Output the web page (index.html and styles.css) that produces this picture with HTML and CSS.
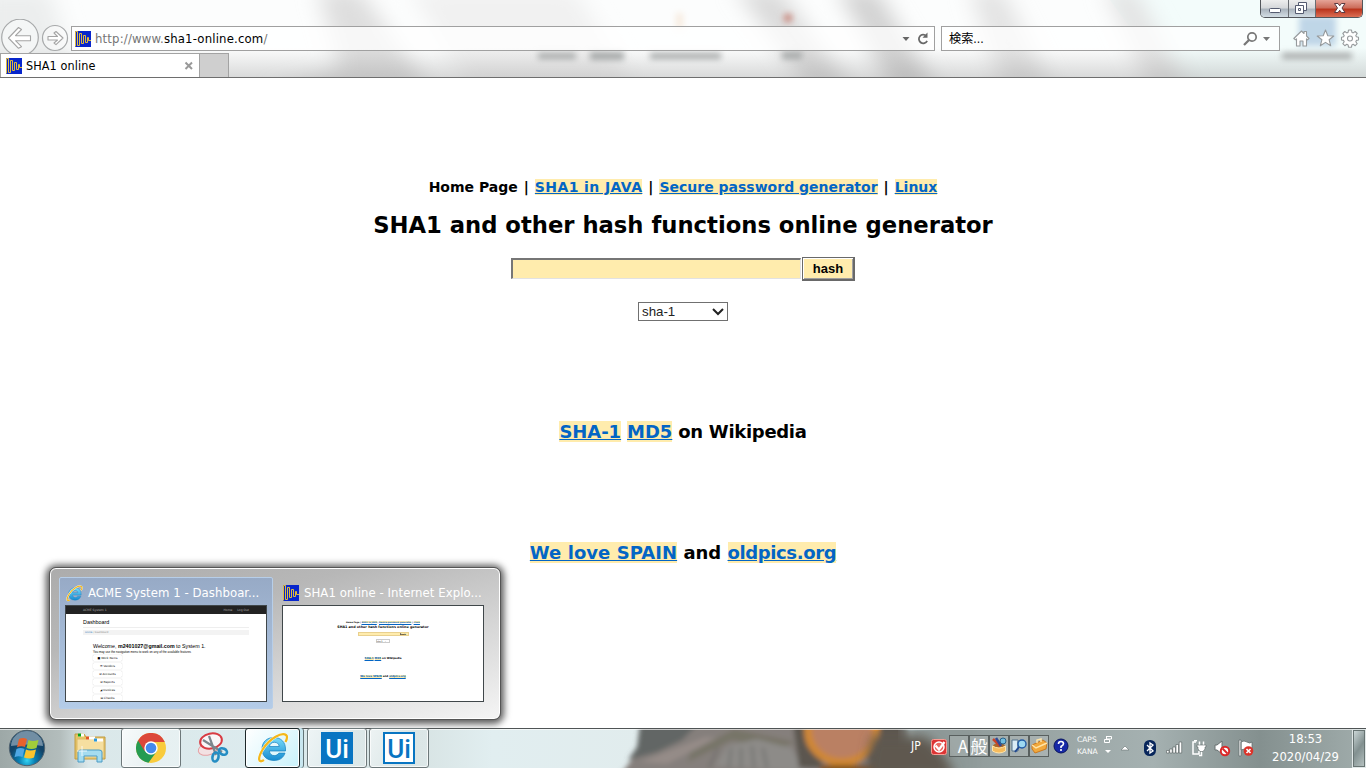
FILE: index.html
```html
<!DOCTYPE html>
<html lang="ja">
<head>
<meta charset="utf-8">
<title>SHA1 online</title>
<link rel="stylesheet" href="styles.css">
</head>
<body>
<svg width="0" height="0" class="defs">
  <symbol id="wave" viewBox="0 0 16 16"><path fill="#0826cc" d="M0 0h16v16H0z"/><path d="M.5 15.500V.5h2v14h2V2.500h2v10h2V4.500h2v7h2V6.500h1v3H16" fill="none" stroke="#f8cc2d" stroke-width=".9"/></symbol>
  <symbol id="ie" viewBox="0 0 32 32"><defs><linearGradient id="ieb" x2="0" y2="1"><stop stop-color="#79dcfa"/><stop offset="1" stop-color="#168bd0"/></linearGradient></defs><path d="M28.500 19H12.300c.4 3 2.300 4.600 5 4.600 2.100 0 3.600-.9 4.600-2.500h6.100c-1.700 5-5.600 7.400-11 7.400C9.800 28.500 5 24 5 17S9.800 5.500 17 5.500 28.500 10.400 28.500 17zM12.400 14.500h9.800c-.3-2.700-2.100-4.200-4.800-4.200s-4.500 1.500-5 4.200z" fill="url(#ieb)" stroke="#1680bd" stroke-width=".7"/><path d="M7 28c-6 4-6.500-2-1-11C13 6 25 0 29 3c2 1.500 1 4-.5 7" fill="none" stroke="#fff" stroke-width="3"/><path d="M7 28c-6 4-6.500-2-1-11C13 6 25 0 29 3c2 1.500 1 4-.5 7" fill="none" stroke="#f3b81c" stroke-width="2.300"/></symbol>
</svg>
<header class="chrome">
  <svg class="glass" viewBox="0 0 1366 77" preserveAspectRatio="none">
    <defs>
      <linearGradient id="shade" x2="0" y2="1"><stop offset=".62" stop-color="#888" stop-opacity="0"/><stop offset="1" stop-color="#888" stop-opacity=".3"/></linearGradient>
      <filter id="b8"><feGaussianBlur stdDeviation="11 9"/></filter>
      <filter id="b3" x="-20%" y="-60%" width="140%" height="220%"><feGaussianBlur stdDeviation="3"/></filter>
    </defs>
    <path fill="#fcfdfd" d="M0 0h1366v77H0z"/>
    <path fill="#f3fcfb" d="M1110 0h256v77h-200z"/>
    <g filter="url(#b8)">
      <path fill="#eceeee" d="M-20-10H50L80 90H-20z"/>
      <path fill="#dedede" d="M318-10h42l70 100H270l70-20z"/>
      <path fill="#f1f1f1" d="M410-10h165l60 100H470z"/>
      <path fill="#dadada" d="M736-10h44l73 100h-44z"/>
      <path fill="#d2d2d2" d="M838-10h39l60 100h-44z"/>
      <path fill="#e3e3e3" d="M970-10h33l50 100h-50zM1105-10h30l55 100h-40z"/>
    </g>
    <path fill="url(#shade)" d="M0 0h1366v77H0z"/>
    <g filter="url(#b3)">
      <path fill="#a4a7a7" d="M538 53h38v6h-38zM590 52h34v8h-34zM650 53h71v6h-71zM782 52h20v7h-20zM1282 53h70v6h-70z"/>
      <path fill="#c98a80" d="M784 14h8v8h-8z"/><path fill="#f7ebdf" d="M676 13h7v16h-7z"/>
      <path fill="#bfd6e7" d="M1299 16h37v30h-37z"/>
    </g>
  </svg>
  <div class="caption">
    <span class="cap min"><svg width="27" height="18"><rect x="8.500" y="8.500" width="11" height="4" rx="1" fill="#fff" stroke="#555b70"/></svg></span>
    <span class="cap max"><svg width="26" height="18"><g fill="#fff" stroke="#555b70"><path d="M9.500 2.500h8v8h-8z"/><path d="M6.500 5.500h8v8h-8z"/><path d="M9.500 8.500h2v2h-2z"/></g></svg></span>
    <span class="cap close"><svg width="46" height="18"><path d="M18.500 3.500h3.500l1.700 2.300 1.700-2.300H29L26 8l3 4.500h-3.500l-1.800-2.200-1.700 2.200h-3.500l3-4.500z" fill="#fff" stroke="#5b3b42"/></svg></span>
  </div>
  <div class="bar">
    <svg class="navs" width="70" height="36"><g fill="#fff" fill-opacity=".45" stroke="#a7a9aa" stroke-width="1.200"><circle cx="20" cy="18.500" r="18.300"/><circle cx="55" cy="19" r="12.500"/></g><g fill="#fff" stroke="#a5a5a5" stroke-width="1.100" stroke-linejoin="round"><path d="M8.500 19 18.500 8.500l3 2-6 6.200H30.500v5H15.500l6 6-3 1.600z"/><path d="M63 19 56 12.500l-2 1.500 3.500 3.500H48v3.500h9.500L54 24l2 1.600z"/></g></svg>
    <div class="address">
      <svg width="16" height="16"><use href="#wave"/></svg>
      <span class="url">http://www.<b>sha1-online.com</b>/</span>
      <svg class="right" width="36" height="20"><path d="M4.500 8h7L8 12z" fill="#666"/><path d="M28.300 7a4.300 4.300 0 1 0 .8 4.800" fill="none" stroke="#696969" stroke-width="1.800"/><path d="M29.500 3.500v5.200h-5z" fill="#696969"/></svg>
    </div>
    <div class="search"><span>検索...</span><svg width="32" height="20"><circle cx="11" cy="8" r="4.200" fill="none" stroke="#777" stroke-width="1.700"/><path d="m8 11-5 5" stroke="#777" stroke-width="2.300"/><path d="M22 8h7l-3.500 4z" fill="#777"/></svg></div>
    <svg class="tools" width="72" height="24"><g fill="#fff" stroke="#969a9c" stroke-width="1.100" stroke-linejoin="round"><path d="m.8 11.500 7.700-7.500 2.500 2.500V4.500h2.500V9l2.500 2.500-1.500 1.300-1-1V19H10v-5H7v5H3.500v-7.200l-1 1z"/><path d="m32.500 3 2.300 5.800 6 .2-4.700 3.700 1.600 6.100-5.200-3.400-5.200 3.400 1.600-6.100L24.200 9l6-.2z"/><path d="M55.500 3h3l.4 2.300 1.300.6 2-1.400 2 2-1.400 2 .6 1.300 2.100.4v2.800l-2.100.4-.6 1.300 1.400 2-2 2-2-1.400-1.300.6-.4 2.300h-3l-.4-2.300-1.300-.6-2 1.400-2-2 1.400-2-.6-1.300-2.100-.4v-2.800l2.100-.4.6-1.300-1.400-2 2-2 2 1.400 1.300-.6z"/><circle cx="57" cy="11.500" r="2.500"/></g></svg>
  </div>
  <div class="tabs">
    <div class="tab"><svg width="16" height="16"><use href="#wave"/></svg><span>SHA1 online</span><svg class="x" width="10" height="10"><path d="m1.500 1.500 6.500 6.500m0-6.500L1.500 8" stroke="#999" stroke-width="2"/></svg></div>
    <div class="newtab"></div>
  </div>
</header>
<main class="page">
  <nav class="links">Home Page <i>|</i> <a class="java">SHA1 in JAVA</a> <i>|</i> <a>Secure password generator</a> <i>|</i> <a>Linux</a></nav>
  <h1>SHA1 and other hash functions online generator</h1>
  <div class="form"><span class="field"></span><span class="hash">hash</span></div>
  <div class="select"><span>sha-1</span><svg width="14" height="10"><path d="m2 2 5 5 5-5" fill="none" stroke="#222" stroke-width="2"/></svg></div>
  <p class="wiki"><a>SHA-1</a> <a>MD5</a> on Wikipedia</p>
  <p class="spain"><a class="love">We love SPAIN</a> and <a class="old">oldpics.org</a></p>
</main>
<aside class="previews">
  <div class="preview active">
    <div class="ptitle"><svg width="17" height="17"><use href="#ie"/></svg><span>ACME System 1 - Dashboar...</span></div>
    <div class="thumb acme">
      <div class="ahead"><span>ACME System 1</span><span class="ar">Home &nbsp; &nbsp; Log Out</span></div>
      <div class="dash">Dashboard</div>
      <div class="crumb"><i>Home</i> / Dashboard</div>
      <div class="welcome">Welcome, <b>m2401027@gmail.com</b> to System 1.</div>
      <div class="note">You may use the navigation menu to work on any of the available features</div>
      <div class="mi">■ Work Items</div><div class="mi">☰ Vendors</div><div class="mi">✉ Accounts</div><div class="mi">✉ Reports</div><div class="mi">◢ Invoices</div><div class="mi">▤ Checks</div>
    </div>
  </div>
  <div class="preview">
    <div class="ptitle"><svg width="16" height="16"><use href="#wave"/></svg><span>SHA1 online - Internet Explo...</span></div>
    <div class="thumb sha">
      <div class="s1">Home Page | <a>SHA1 in JAVA</a> | <a>Secure password generator</a> | <a>Linux</a></div>
      <div class="s2">SHA1 and other hash functions online generator</div>
      <div class="s3"><span></span><b>hash</b></div>
      <div class="s4">sha-1 &nbsp; ⌄</div>
      <div class="s5"><a>SHA-1</a> <a>MD5</a> on Wikipedia</div>
      <div class="s6"><a>We love SPAIN</a> and <a>oldpics.org</a></div>
    </div>
  </div>
</aside>
<footer class="taskbar">
  <svg class="glass" viewBox="0 0 1366 40" preserveAspectRatio="none">
    <defs>
      <linearGradient id="tb"><stop stop-color="#9da8a7"/><stop offset=".044" stop-color="#b3bdbc"/><stop offset=".065" stop-color="#dbe8ea"/><stop offset=".2" stop-color="#dcebee"/><stop offset=".3" stop-color="#d6e2e2"/><stop offset=".36" stop-color="#e1eef0"/><stop offset=".47" stop-color="#e1eced"/></linearGradient>
      <linearGradient id="tray"><stop stop-color="#8e9998"/><stop offset=".5" stop-color="#a5b1b1"/><stop offset=".75" stop-color="#84908f"/><stop offset="1" stop-color="#a1adac"/></linearGradient>
      <filter id="b2"><feGaussianBlur stdDeviation="2.500"/></filter>
      <filter id="b6"><feGaussianBlur stdDeviation="6"/></filter>
    </defs>
    <path fill="url(#tb)" d="M0 0h1366v40H0z"/>
    <g filter="url(#b2)">
      <path fill="#857f7b" d="M640-6h250v52H621l17-23z"/>
      <path fill="#626665" d="m640-4 58 0-16 16-25 12-29 8 9-13z"/>
      <path fill="#777468" d="m690 25 44-24 61 13-20 8-43-10-44 22z"/>
      <path fill="#958c88" d="m640 34 65-25 12 1-50 26z"/>
      <path fill="#8d8b88" d="m715 38 12-20 30-7 34 9 16 24z"/>
      <path d="m709 40 9-20m11 20 2-20m10 20V20m13 20-2-22m15 22-4-20" stroke="#6c6d6b" stroke-width="2"/>
      <path fill="#5b5650" d="M793-4h20l10 44h-24zM868 27l10-35h30l10 60h-40z"/>
      <ellipse cx="842" cy="3" rx="34" ry="31" fill="#ba8063" stroke="#cf8735" stroke-width="8"/>
      <path fill="#82521d" d="M820 37h62v8h-62z"/>
    </g>
    <path fill="url(#tray)" d="M940 0h426v40H940z"/>
    <path filter="url(#b6)" fill="#8e9998" d="M905-10h70v60h-70z"/>
    <path filter="url(#b6)" fill="#5f5950" d="M872 8h52q20 12 32 42H865z"/>
    <path d="M0 .5h1366" stroke="#4f5455"/><path d="M0 1.500h1366" stroke="#fff" opacity=".65"/>
  </svg>
  <div class="start"><svg width="38" height="38" viewBox="0 0 38 38"><defs><radialGradient id="orb" cy=".85"><stop stop-color="#35d4f3"/><stop offset=".45" stop-color="#087fb3"/><stop offset="1" stop-color="#134468"/></radialGradient></defs><circle cx="19" cy="19" r="17.700" fill="url(#orb)" stroke="#50626f"/><path d="M3 17a16 15 0 0 1 32 0q-15-3-32 0z" fill="#fff" opacity=".4"/><path d="M11 10q4-2 8 0l-2 8q-4-1.500-8 .3z" fill="#e7622d"/><path d="M20.500 11q4 2 10 0l-2 8q-5 2-10 0z" fill="#a2cd39"/><path d="M8.500 20q4-2 8 0l-2 8q-4-1.500-8 .2z" fill="#4fa7e4"/><path d="M18 20.500q4 2 10 0l-2 8q-4 2-10 0z" fill="#fbc42d"/></svg></div>
  <div class="task plain explorer"><svg width="34" height="32"><path d="M2 2h9l2 3h19v22H2z" fill="#e5c565" stroke="#c09a43"/><path d="M4 7h27v19H4z" fill="#f6dfa0" stroke="#dcb966"/><path d="M5 3h6M13 6h9M21 8h9" stroke="#fff" stroke-width="3"/><path d="M5 3h3" stroke="#09a31a" stroke-width="3"/><path d="M13 6h3" stroke="#e15724" stroke-width="3"/><path d="M21 8h3" stroke="#2998dd" stroke-width="3"/><path d="M5 30V20q0-2 3-2h18q3 0 3 2v10h-5v-6H11v6z" fill="#a5dcf0" stroke="#4a9bc5"/><path d="M4 19h10M9 14v10" stroke="#fff" opacity=".8"/></svg></div>
  <div class="task chromeapp"><svg width="30" height="30" viewBox="0 0 30 30"><circle cx="15" cy="15" r="15" fill="#f9cb3c"/><path d="M15 15 2 7.500A15 15 0 0 0 12.500 29.800L21 18z" fill="#259b52"/><path d="M2 7.500A15 15 0 0 1 28.800 9H15l-6.500 9z" fill="#dc473a"/><circle cx="15" cy="15" r="6.700" fill="#fff"/><circle cx="15" cy="15" r="5.300" fill="#4589ed"/></svg></div>
  <div class="task plain snip"><svg width="32" height="34"><g fill="none"><ellipse cx="11" cy="18" rx="10" ry="6" fill="#f3e1e3" stroke="#e6a0a4" transform="rotate(-15 11 18)"/><ellipse cx="14" cy="10" rx="11" ry="7.500" fill="#f9f6f8" stroke="#d83b43" stroke-width="2" transform="rotate(-12 14 10)"/><path d="m6 9 19 12M12 5l7 19" stroke="#7c858c" stroke-width="2.200"/><ellipse cx="18.500" cy="26" rx="3" ry="4.500" stroke="#258dc3" stroke-width="2.600" transform="rotate(12 18.500 26)"/><ellipse cx="26" cy="20.500" rx="4.200" ry="3" stroke="#258dc3" stroke-width="2.600" transform="rotate(25 26 20.500)"/></g></svg></div>
  <div class="task ieapp"><svg width="32" height="32"><use href="#ie"/></svg></div>
  <div class="task uione"><span class="ui">Ui</span></div>
  <div class="task uitwo"><span class="ui inv">Ui</span></div>
  <div class="tray">
    <span class="jp">JP</span>
    <svg class="atok" width="16" height="16"><rect x=".5" y=".5" width="15" height="15" rx="2" fill="#dc3434" stroke="#f79b92"/><circle cx="8" cy="8" r="5" fill="#e86a62" stroke="#fff" stroke-width="1.500"/><path d="m4.500 6.500 3.500 4 5.500-7.500" stroke="#fff" stroke-width="2.200" fill="none"/></svg>
    <span class="ime"><em class="a">A</em><em>般</em>
      <em><svg width="18" height="18"><ellipse cx="9" cy="9" rx="6" ry="3" fill="#a9682b"/><path d="m3 2 7 7" stroke="#c8442a" stroke-width="2.500"/><path d="m6 1 5 8" stroke="#304a97" stroke-width="2.500"/><circle cx="13" cy="4" r="3" fill="#72bddf" stroke="#28618b"/><path d="M2.500 9q6.500 4 13 0v5q-6.500 4-13 0z" fill="#f6bb5c" stroke="#ffe4aa"/></svg></em>
      <em><svg width="18" height="18"><path d="M2 3h6v11H2zM8 4h5v6H8z" fill="#dcecf5" stroke="#55738c"/><circle cx="12" cy="7" r="4" fill="#9ed8f1" stroke="#235ca7" stroke-width="1.400"/><path d="m9 10-4 5" stroke="#204891" stroke-width="2"/></svg></em>
      <em><svg width="18" height="18"><path d="m2 8 11-5 4 3-1 6-11 4-3-4z" fill="#f1a83c" stroke="#c97921"/><path d="m2 8 4 3 11-5M7 6V3l4-1v3" fill="none" stroke="#ffe4a7" stroke-width="1.500"/></svg></em></span>
    <svg class="help" width="16" height="16"><circle cx="8" cy="8" r="7" fill="#1729a7" stroke="#08145e"/><path d="M5.500 6q0-2.500 2.500-2.500t2.500 2.300Q10.500 7 8 8.500V10M8 11v2" fill="none" stroke="#fff" stroke-width="1.600"/></svg>
    <span class="caps"><span>CAPS <svg width="8" height="7"><path d="M2.500 0v3h5V.5h-5M.5 3.500h5v3h-5z" fill="none" stroke="#fff"/></svg></span><span>KANA <svg width="8" height="5"><path d="M1 1h6L4 4z" fill="#fff"/></svg></span></span>
    <svg class="up" width="10" height="8"><path d="m1 6 4-4 4 4z" fill="#fff" stroke="#687473" stroke-width=".6"/></svg>
    <svg class="bt" width="12" height="16"><rect width="12" height="16" rx="5.500" fill="#08265b"/><path d="m3 5 6 6-3 2V3l3 2-6 6" fill="none" stroke="#fff" stroke-width="1.300"/></svg>
    <svg class="signal" width="17" height="14"><g fill="#fff" stroke="#505a5a" stroke-width=".6"><path d="M.5 9.500h2.500v2.500H.5zM3.700 8h2.500v4H3.700zM6.900 6h2.500v6H6.900zM10 3.500h2.500V12H10zM13.200 1h2.500v11h-2.500z"/></g></svg>
    <svg class="power" width="16" height="17"><path d="M5 2H2v12h6v-3" fill="none" stroke="#fff" stroke-width="1.500"/><path d="M3 .8h3M8.500 1.500V5m4-3.500V5M10.500 11v4.500H8" fill="none" stroke="#fff" stroke-width="1.500"/><path d="M6 5h9v2h-1v2l-2 2.500H9L7 9V7H6z" fill="#fff" stroke="#5e6868" stroke-width=".6"/></svg>
    <svg class="vol" width="18" height="18"><path d="M2 6h2l5-4v13l-5-4H2z" fill="#fff" stroke="#687171"/><circle cx="12" cy="12" r="4.200" fill="#fff" stroke="#db2828" stroke-width="2"/><path d="m9.500 9.500 5 5" stroke="#db2828" stroke-width="2"/></svg>
    <svg class="flag" width="18" height="18"><path d="M2 1h2v16H2zM4 3q3-2 6 0t5 0v8q-3 2-5 0t-6 0z" fill="#fff" stroke="#667070" stroke-width=".8"/><circle cx="11.500" cy="12" r="4.800" fill="#dc3229"/><path d="m9.500 10 4 4m0-4-4 4" stroke="#fff" stroke-width="1.600"/></svg>
    <span class="clock"><span>18:53</span><span>2020/04/29</span></span>
    <span class="show"></span>
  </div>
</footer>
</body>
</html>
```
FILE: styles.css
```css
* { box-sizing: border-box; }
body { margin: 0; width: 1366px; height: 768px; overflow: hidden; position: relative; display: flex; flex-direction: column; background: #fff; font-family: "DejaVu Sans", sans-serif; color: #000; }
svg { display: block; flex: none; }
.defs { position: absolute; }
.glass { position: absolute; inset: 0; width: 100%; height: 100%; }

/* browser chrome */
.chrome { position: relative; flex: none; height: 78px; border-bottom: 1px solid #6e6e6e; padding-top: 19px; font-family: "DejaVu Sans Condensed", "DejaVu Sans", sans-serif; font-size: 13px; }
.caption { position: absolute; left: 1260px; top: 0; height: 18px; display: flex; border: 1px solid #53565b; border-top: 0; border-radius: 0 0 5px 5px; overflow: hidden; }
.cap { border-right: 1px solid #6a6d72; height: 18px; background: linear-gradient(#eee 0, #d5d7da 45%, #a9b2bb 50%, #d8e2e9); }
.cap.min { width: 28px; }
.cap.max { width: 27px; }
.cap.close { width: 46px; border: 0; background: linear-gradient(#e5a498 0, #cb6a58 45%, #b9321b 50%, #e0765b); }
.bar { position: relative; display: flex; height: 34px; }
.navs { margin-right: 1px; }
.address { width: 864px; height: 25px; margin-top: 7px; border: 1px solid #a0a0a0; background: rgba(255,255,255,.75); display: flex; align-items: center; padding-left: 3px; }
.url { margin-left: 4px; color: #757575; white-space: nowrap; letter-spacing: .17px; }
.url b { color: #000; font-weight: 400; }
.right { margin-left: auto; margin-right: 0; }
.search { width: 339px; height: 25px; margin: 7px 0 0 6px; border: 1px solid #a0a0a0; background: rgba(255,255,255,.75); display: flex; align-items: center; justify-content: space-between; padding: 0 6px 0 7px; font-family: "DejaVu Sans Condensed", "Noto Sans CJK JP", sans-serif; font-size: 12.200px; }
.search span { padding-bottom: 2px; }
.tools { margin: 8px 0 0 13px; }
.tabs { position: relative; display: flex; height: 24px; }
.tab { width: 200px; border: 1px solid #a3a3a3; border-bottom: 0; background: #fff; display: flex; align-items: center; padding-left: 5px; font-size: 12.500px; letter-spacing: .1px; }
.tab span { margin-left: 4px; }
.tab .x { margin-left: auto; margin-right: 5px; }
.newtab { width: 29px; border: 1px solid #a3a3a3; border-left: 0; border-bottom: 0; background: #cfcfcf; }

/* document */
.page { flex: 1; display: flex; flex-direction: column; align-items: center; font-weight: 700; padding-top: 101px; white-space: nowrap; }
.page a { color: #0365c5; text-decoration: underline; background: #ffecad; }
.links { font-size: 14px; line-height: 17px; }
.links i { font-style: normal; padding: 0 1.100px; }
.java { letter-spacing: .4px; }
h1 { margin: 14px 0 0; font-size: 22.700px; line-height: 30px; }
.form { display: flex; align-items: flex-start; gap: 1px; margin-top: 17px; height: 24px; }
.field { width: 290px; height: 21px; margin-top: 1px; background: #ffecad; border: 1px solid #e2e2e2; border-top: 2px solid #767676; border-left: 2px solid #767676; }
.hash { width: 53px; height: 24px; background: #ffecad; border: 1px solid #696969; border-right-width: 2px; border-bottom-width: 2px; box-shadow: inset 1px 1px #fff, inset -1px -1px #a0a0a0; text-align: center; font: 700 13px/21px "Liberation Sans", sans-serif; }
.select { width: 90px; height: 19px; margin-top: 21px; border: 1px solid #707070; display: flex; align-items: center; justify-content: space-between; padding: 0 2px 0 3px; font: 13.300px "Liberation Sans", sans-serif; }
.select span { color: #222; }
.wiki, .spain { margin: 0; font-size: 18px; line-height: 22px; }
.wiki { margin-top: 100px; letter-spacing: -.3px; }
.wiki a { letter-spacing: -.05px; }
.spain { margin-top: 99px; }
.love { letter-spacing: .05px; }
.old { letter-spacing: -.38px; }

/* taskbar */
.taskbar { position: relative; flex: none; display: flex; height: 40px; }
.start { position: relative; width: 54px; padding: 1px 0 0 8px; }
.task { position: relative; width: 60px; height: 40px; display: flex; align-items: center; justify-content: center; border: 1px solid #6d787a; border-radius: 3px; background: linear-gradient(115deg, rgba(255,255,255,.8), rgba(255,255,255,.32) 60%); box-shadow: inset 0 0 0 1px rgba(255,255,255,.7); }
.task.plain { border: 0; background: none; box-shadow: none; }
.explorer { margin-left: 9px; width: 54px; }
.chromeapp { margin-left: 4px; }
.snip { margin-left: 2px; }
.ieapp { margin-left: 2px; width: 55px; background: linear-gradient(130deg, #fff, #c9f2fb); border-color: #1c2729; box-shadow: inset 0 0 0 1px #fff, 3px 0 #c9e7f0, 4px 0 #647477; }
.uione { margin-left: 7px; }
.uitwo { margin-left: 2px; }
.task.uione, .task.uitwo { background: linear-gradient(115deg, rgba(255,255,255,.55), rgba(255,255,255,.1) 60%); }
.ui { width: 32px; height: 32px; background: #0875c2; color: #fff; font: 500 26px/34px Roboto, sans-serif; text-align: center; letter-spacing: 0; }
.ui.inv { background: #fff; color: #0875c2; border: 2px solid #0875c2; line-height: 30px; }
.tray { position: relative; flex: 1; display: flex; align-items: center; padding-left: 482px; color: #fff; }
.jp { width: 14px; font: 12px "DejaVu Sans Condensed", sans-serif; margin-bottom: 4px; }
.atok { margin: 0 2px 3px 6px; }
.ime { display: flex; margin-bottom: 4px; }
.ime em { width: 20px; height: 22px; border: 1px solid #59605f; display: flex; align-items: center; justify-content: center; background: rgba(255,255,255,.15); font: 17px/20px "Noto Sans CJK JP", sans-serif; }
.ime .a { padding-left: 8px; }
.help { margin: 0 8px 4px 4px; }
.caps { display: flex; flex-direction: column; gap: 3px; font: 7.500px/9px "DejaVu Sans", sans-serif; width: 35px; margin-bottom: 5px; }
.caps > span { display: flex; align-items: center; justify-content: space-between; }
.up { margin-left: 8px; }
.bt { margin-left: 14px; }
.signal { margin-left: 10px; }
.power { margin-left: 8px; }
.vol { margin-left: 6px; }
.flag { margin-left: 6px; }
.clock { margin-left: 8px; width: 85px; text-align: center; display: flex; flex-direction: column; font: 12.900px/18px "DejaVu Sans Condensed", sans-serif; }
.show { width: 14px; height: 39px; margin-left: auto; border: 1px solid #e0e7e7; outline: 1px solid #687473; outline-offset: -2px; background: linear-gradient(125deg, #d2dddd, #829090 50%, #b9c5c4); }

/* window previews above the taskbar */
.previews { position: absolute; left: 50px; top: 568px; width: 450px; height: 151px; display: flex; gap: 3px; padding: 8px; border: 1px solid #fff; outline: 1px solid #555; border-radius: 6px; background: linear-gradient(165deg, #acacac, #b7b7b7 30%, #d4d4d4 62%, #f4f4f4); box-shadow: 0 1px 7px 4px rgba(0,0,0,.65); }
.preview { width: 214px; height: 132px; padding: 5px; border: 1px solid transparent; border-radius: 2px; }
.preview.active { background: linear-gradient(#97aac6, #b4cce8); border-color: #b7cee8; }
.ptitle { display: flex; align-items: center; gap: 5px; height: 20px; margin-bottom: 2px; color: #fff; font: 13px "DejaVu Sans Condensed", sans-serif; letter-spacing: .06px; white-space: nowrap; }
.ptitle span { padding-bottom: 2px; }
.ptitle svg { margin-left: 1px; }
.thumb { width: 202px; height: 97px; border: 1px solid #40474a; background: #fff; overflow: hidden; font-size: 3px; white-space: nowrap; }
.ahead { height: 8px; background: #222; color: #aaa; display: flex; justify-content: space-between; align-items: center; padding: 0 17px; }
.dash { margin: 5px 17px 0; height: 9px; border-bottom: 1px solid #eee; font: 5.400px/7px "Liberation Sans", sans-serif; }
.crumb { margin: 2px 17px 8px; padding-left: 2px; height: 5px; background: #f3f3f3; color: #888; font-size: 2.500px; line-height: 5px; }
.crumb i { color: #3a83bc; font-style: normal; }
.welcome { margin-left: 27px; font: 5.300px/7px "Liberation Sans", sans-serif; }
.note { margin-left: 27px; font: 3px/4px "Liberation Sans", sans-serif; }
.mi { margin: 1px 0 2.100px 27px; width: 29px; height: 6px; box-shadow: 0 0 1px #aaa; border-radius: 1px; text-align: center; font-size: 2.900px; line-height: 6px; }
.sha { display: flex; flex-direction: column; align-items: center; font-weight: 700; }
.sha a { color: #0365c5; text-decoration: underline; background: #ffecad; }
.s1 { margin-top: 14px; font-size: 2.100px; line-height: 4px; }
.s2 { font-size: 3.350px; line-height: 5px; margin-top: 1px; }
.s3 { display: flex; margin-top: 2px; width: 51px; height: 4px; background: #ffecad; border: 1px solid #e9d08e; justify-content: flex-end; }
.s3 b { width: 8px; font-size: 2px; line-height: 3px; border-left: 1px solid #888; }
.s4 { margin-top: 3px; width: 14px; height: 4px; border: 1px solid #ccc; font-size: 2px; line-height: 2px; font-weight: 400; }
.s5 { margin-top: 14px; font-size: 2.650px; line-height: 4px; }
.s6 { margin-top: 14px; font-size: 2.650px; line-height: 4px; }
```
